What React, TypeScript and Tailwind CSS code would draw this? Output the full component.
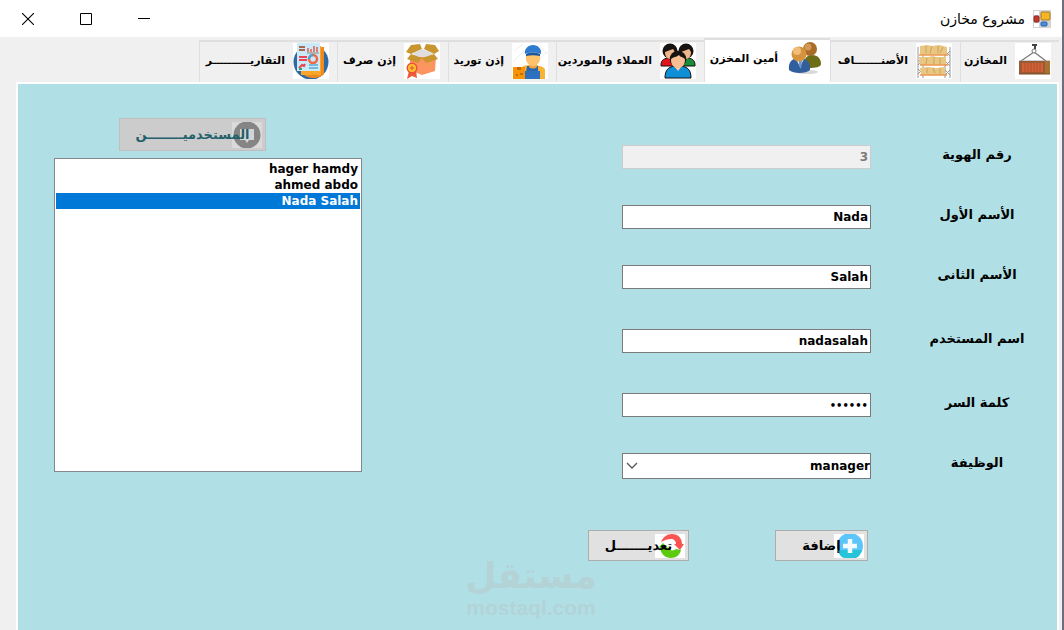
import { useState } from "react";
import type { ReactNode } from "react";
import clsx from "clsx";

const CrateIcon = () => (
  <svg viewBox="0 0 36 36" className="size-9 shrink-0 bg-white">
    <path d="M19 9 6 18M19 9l12 9" stroke="#777" strokeWidth="1.2" fill="none" />
    <path d="M17 1h5v2h-5zM19 3h2v3h-2z" fill="#444" />
    <circle cx="19" cy="8" r="2" fill="#fff" stroke="#777" />
    <path d="M4 18h31" stroke="#999" />
    <rect x="4" y="18" width="31" height="13" fill="#9a5a33" />
    <rect x="7" y="20" width="21" height="9" fill="#cf6336" />
    <path d="M10 20v9M13 20v9M16 20v9M19 20v9M22 20v9M25 20v9" stroke="#b04f2b" strokeWidth="1" />
    <rect x="30" y="18" width="5" height="13" fill="#a87233" />
    <path d="M4 31h31" stroke="#7b4a26" />
  </svg>
);

const ShelfIcon = () => (
  <svg viewBox="0 0 36 36" className="size-9 shrink-0 bg-white">
    <path d="M2 4v31M7 4v31M29 4v31M34 4v31M2 17l5 5M7 17l-5 5M2 26l5 5M7 26l-5 5M29 8l5 5M34 8l-5 5M29 18l5 5M34 18l-5 5M29 27l5 5M34 27l-5 5" stroke="#999" strokeWidth="1" />
    <path d="M4 3l7-1 5 1 7-1 8 2v8H4zM3 14h10l3-1 5 1h9v8H4zM4 25l8-1 8 1 9-1v8H5z" fill="#e9c682" />
    <path d="M10 3v7M16 3l-2 7M22 3v7M27 4l-3 6M11 15l-1 6M18 14v7M24 15v6M11 25v5M17 25l2 5M24 25v6" stroke="#cda258" />
    <path d="M3 12h29M4 22h28M4 32h27" stroke="#ee9650" strokeWidth="1.4" />
  </svg>
);

const KeeperIcon = () => (
  <svg viewBox="0 0 36 36" className="size-9 shrink-0">
    <ellipse cx="21" cy="31" rx="11" ry="2" fill="#d8d8d8" />
    <path d="M18 27c-1-11 4-13 8-13 6 0 9 4 9 9 0 3-6 4-12 4z" fill="#6d6d18" />
    <circle cx="24" cy="8" r="7" fill="#a96b28" />
    <circle cx="22" cy="6" r="3.5" fill="#d39a55" />
    <path d="M3 29c-1-8 3-12 10-12s12 4 11 12c-4 4-17 4-21 0z" fill="#315f9e" />
    <path d="M10 18l4 8 4-8z" fill="#dce8f4" />
    <path d="M13 20h3l-1 8-2-3z" fill="#6f98ca" />
    <circle cx="13" cy="13" r="7.5" fill="#d5933e" />
    <circle cx="11" cy="10" r="4" fill="#f0be78" />
  </svg>
);

const PeopleIcon = () => (
  <svg viewBox="0 0 36 36" className="size-9 shrink-0 bg-white">
    <path d="M1 22c0-5 3-7 9-7l4 8H1z" fill="#e3151c" stroke="#111" />
    <path d="M35 22c0-5-3-7-9-7l-4 8h13z" fill="#1a8b3a" stroke="#111" />
    <circle cx="10" cy="8" r="7.5" fill="#171310" />
    <path d="M5 9l8-3 2 3c0 4-2 7-5 7s-5-3-5-7z" fill="#f0b58b" />
    <circle cx="26" cy="8" r="7.5" fill="#171310" />
    <path d="M21 9l8-3 2 3c0 4-2 7-5 7s-5-3-5-7z" fill="#f0b58b" />
    <path d="M5 35c0-9 4-12 13-12s13 3 13 12z" fill="#0e8fd6" stroke="#111" />
    <path d="M14 23l4 5 4-5z" fill="#f8caa5" />
    <circle cx="18" cy="16" r="8.3" fill="#171310" />
    <path d="M11 17c0-3 4-2 8-5 2 3 6 2 6 5 0 5-3 8-7 8s-7-3-7-8z" fill="#f8bd92" />
  </svg>
);

const CourierIcon = () => (
  <svg viewBox="0 0 36 36" className="size-9 shrink-0 bg-white">
    <path d="M2 8l9-7M1 19 12 8M28 3l7 8M27 17l8-8" stroke="#eee" />
    <path d="M9 36V26c0-3 4-4 11-4s13 2 13 5v9z" fill="#f9b233" />
    <path d="M15 23h11v13H13z" fill="#2765b0" />
    <path d="M13 28h15v8H12z" fill="#2d70bf" />
    <path d="M17 19h8v5c-2 2-6 2-8 0z" fill="#f4a33e" />
    <path d="M14 11h14v5c0 4-4 7-7 7s-7-3-7-7z" fill="#ffc36e" />
    <path d="M13 11c-1-5 3-9 8-9s9 4 8 9c-5-2-11-2-16 0z" fill="#2f7bd0" />
    <path d="M14 11c5-2 9-2 14 0v2c-5-1-9-1-14 0z" fill="#1e569c" />
    <rect x="1" y="24" width="12" height="12" fill="#f79307" />
    <path d="M5 24h4v3H5z" fill="#c9660a" />
    <path d="M4 32h2M8 31h3" stroke="#8c460a" />
  </svg>
);

const OpenBoxIcon = () => (
  <svg viewBox="0 0 36 36" className="size-9 shrink-0 bg-white">
    <path d="M6 14h26l-1 14-13 4-12-5z" fill="#fb9460" />
    <path d="M7 2l9-1 2 5-11 5-5-2zM20 6l2-5 9 1 4 6-5 3z" fill="#c9952e" />
    <path d="M9 10l9-4 11 4-3 4H11z" fill="#dedede" />
    <path d="M7 11l11 4-4 5-11-4zM30 11l-12 4 4 5 12-4z" fill="#c9952e" />
    <path d="M23 22l3-2v3z" fill="#e3aa42" />
    <path d="M5 28l-2 8 5-3 5 2-1-8z" fill="#ef5a38" />
    <circle cx="8" cy="25" r="5.5" fill="#ee4e35" />
    <circle cx="8" cy="25" r="4" fill="#fcc72e" />
    <path d="M8 22l1 2 2 1-2 1-1 2-1-2-2-1 2-1z" fill="#ee6d35" />
  </svg>
);

const ReportIcon = () => (
  <svg viewBox="0 0 36 36" className="size-9 shrink-0 bg-white">
    <circle cx="18" cy="19" r="17.5" fill="#2f6aa5" />
    <path d="M12 4h19v27c-4 5-15 5-20 1z" fill="#f08a1c" />
    <path d="M8 3h20v29H8z" fill="#fba52d" />
    <path d="M4 0h23v28H4z" fill="#caeafa" />
    <path d="M6 4h6M6 7h6" stroke="#a9674f" strokeWidth="2" />
    <path d="M15 9V5M18 9V6M21 9V3M24 9V4" stroke="#e65b4a" strokeWidth="1.5" />
    <path d="M14 10h12" stroke="#8e8275" />
    <path d="M6 14h8M6 17h8" stroke="#ee4454" strokeWidth="2" />
    <circle cx="20" cy="16" r="4" fill="none" stroke="#ef6845" strokeWidth="2.5" />
    <path d="M16 16a4 4 0 0 1 4-4" fill="none" stroke="#4fa4d6" strokeWidth="2.5" />
    <path d="M6 25l3-3 2 1 1-2" fill="none" stroke="#e6464e" strokeWidth="2" />
    <path d="M6 26h3" stroke="#36a569" strokeWidth="2" />
    <path d="M16 22h9M16 25h9" stroke="#75b9dc" strokeWidth="2" />
  </svg>
);

const TABS = [
  { id: "stores", label: "المخازن", icon: <CrateIcon />, width: "w-[99px]" },
  { id: "items", label: "الأصنـــــــاف", icon: <ShelfIcon />, width: "w-[130px]" },
  { id: "keeper", label: "أمين المخزن", icon: <KeeperIcon />, width: "w-[126px]" },
  { id: "clients", label: "العملاء والموردين", icon: <PeopleIcon />, width: "w-[148px]" },
  { id: "supply", label: "إذن توريد", icon: <CourierIcon />, width: "w-[108px]" },
  { id: "issue", label: "إذن صرف", icon: <OpenBoxIcon />, width: "w-[111px]" },
  { id: "reports", label: "التقاريــــــــــر", icon: <ReportIcon />, width: "w-[138px]" },
];

const USERS = ["hager hamdy", "ahmed abdo", "Nada Salah"];

const inputClass = "block h-6 w-full border border-[#7a7a7a] bg-white px-0.5 text-right font-bold text-black outline-none";

export default function App() {
  const [tab, setTab] = useState("keeper");
  const [selected, setSelected] = useState("Nada Salah");

  return (
    <div dir="rtl" className="relative flex min-h-screen flex-col border-r-2 border-[#6d6f7c] bg-[#f0f0f0] font-['DejaVu_Sans',sans-serif] text-xs text-black">
      <TitleBar />

      <nav role="tablist" className="flex h-[45px] items-end pr-[3px] pt-px">
        {TABS.map((t) => (
          <button
            key={t.id}
            type="button"
            role="tab"
            aria-selected={tab === t.id}
            onClick={() => setTab(t.id)}
            className={clsx(
              "flex shrink-0 items-center gap-2 whitespace-nowrap border-l border-t-2 border-[#dfdfdf] pr-2 text-[11px] font-bold",
              t.width,
              tab === t.id ? "h-11 bg-white pb-1" : "h-[42px] pb-0.5"
            )}
          >
            {t.icon}
            {t.label}
          </button>
        ))}
      </nav>

      <main className="ml-4 mr-[3px] flex flex-1 items-start justify-between border-x-2 border-t-2 border-white bg-[#b0e0e6] pb-16 pl-9 pr-[26px]">
        <form className="pt-[61px]" onSubmit={(e) => e.preventDefault()}>
          <Field id="identity" label="رقم الهوية">
            <input id="identity" disabled defaultValue="3" className="block h-6 w-full border border-[#cccccc] bg-[#f0f0f0] px-0.5 text-right font-bold text-[#7b7b7b]" />
          </Field>
          <Field id="first" label="الأسم الأول" gap="mt-9">
            <input id="first" defaultValue="Nada" className={inputClass} />
          </Field>
          <Field id="last" label="الأسم الثانى" gap="mt-9">
            <input id="last" defaultValue="Salah" className={inputClass} />
          </Field>
          <Field id="username" label="اسم المستخدم" gap="mt-10">
            <input id="username" defaultValue="nadasalah" className={inputClass} />
          </Field>
          <Field id="password" label="كلمة السر" gap="mt-10">
            <input id="password" type="password" defaultValue="123456" className={clsx(inputClass, "text-[10px]")} />
          </Field>
          <Field id="job" label="الوظيفة" gap="mt-9">
            <div className="relative">
              <select id="job" defaultValue="manager" className="block h-[26px] w-full appearance-none border border-[#7a7a7a] bg-white font-bold outline-none">
                <option>manager</option>
                <option>employee</option>
              </select>
              <svg viewBox="0 0 12 8" className="pointer-events-none absolute left-1 top-2 h-2.5 w-3">
                <path d="M1 1l5 5 5-5" fill="none" stroke="#555" strokeWidth="1.3" />
              </svg>
            </div>
          </Field>

          <div className="mt-[51px] flex gap-[86px] pr-[163px]">
            <IconButton label="إضافة" className="h-[31px] w-[93px] border-[#adadad] bg-[#e1e1e1]">
              <svg viewBox="0 0 30 24" className="h-6 w-[30px] bg-white">
                <circle cx="16" cy="12" r="13" fill="#5cc6fb" />
                <path d="M4 16h24c-2 6-5 8-7 8H11c-3 0-6-3-7-8z" fill="#27c3d8" />
                <path d="M16 5v14M9 12h14" stroke="#f4fbff" strokeWidth="4.5" />
              </svg>
            </IconButton>
            <IconButton label="تعديـــــــل" className="h-[31px] w-[101px] border-[#adadad] bg-[#e1e1e1]">
              <svg viewBox="0 0 30 24" className="h-6 w-[30px] bg-white">
                <path d="M6 8C8 3 12 0 17 0c6 0 10 4 10 10l2 0-4 6-6-6h2c0-3-2-5-5-5-4 0-6 1-10 3z" fill="#fb5350" />
                <path d="M4 13l4-4 5 5c2 3 6 3 8 1l5 1c-1 5-5 8-10 8-6 0-10-4-11-10z" fill="#5ccb10" />
              </svg>
            </IconButton>
          </div>
        </form>

        <section className="w-[308px] pt-[34px]">
          <div className="pr-24">
            <IconButton disabled label="المستخدميــــــــن" className="h-[33px] w-[147px] border-[#bfbfbf] bg-[#cccccc] text-[#22606b]">
              <svg viewBox="0 0 30 26" className="h-[26px] w-[30px] bg-[#dadada]">
                <circle cx="15" cy="13" r="13.5" fill="#858585" />
                <path d="M8 7h14v11h-5l-2 3-2-3H8z" fill="#d4d4d4" />
              </svg>
            </IconButton>
          </div>
          <ul role="listbox" aria-label="المستخدمين" className="mt-[7px] h-[314px] border border-[#828790] bg-white px-px py-0.5 font-bold">
            {USERS.map((u) => (
              <li
                key={u}
                role="option"
                aria-selected={selected === u}
                onClick={() => setSelected(u)}
                className={clsx("h-4 px-0.5 leading-4", selected === u && "bg-[#0078d7] text-white")}
              >
                {u}
              </li>
            ))}
          </ul>
        </section>
      </main>

      {/* Filigrane */}
      <div aria-hidden="true" className="pointer-events-none absolute inset-x-0 bottom-3 text-center font-bold text-[#b3d3d7]">
        <div className="text-4xl leading-[44px]">مستقل</div>
        <div className="font-['Liberation_Sans',sans-serif] text-[21px] leading-5">mostaql.com</div>
      </div>
    </div>
  );
}

function TitleBar() {
  return (
    <header className="flex h-[37px] items-center justify-between bg-white pl-5 pr-[11px]">
      <div className="flex items-center gap-2">
        <svg viewBox="0 0 18 18" className="size-[18px] bg-[#d4d4d4]">
          <path d="M1 1h5v4H1zM1 13h5v4H1z" fill="#fff" />
          <rect x="8" y="2" width="9" height="8" rx="1" fill="#f6b526" stroke="#a77b22" />
          <rect x="1" y="6" width="5" height="6" rx="1" fill="#c6392d" stroke="#8f2720" />
          <rect x="8" y="12" width="6" height="4" rx="1" fill="#4a8ee0" stroke="#2862ae" />
        </svg>
        <h1 className="text-sm">مشروع مخازن</h1>
      </div>
      <div className="flex items-center gap-[42px]">
        <button type="button" aria-label="تصغير" className="flex size-4 items-center justify-center">
          <svg viewBox="0 0 12 12" className="size-3"><path d="M0 5.5h12" stroke="#000" /></svg>
        </button>
        <button type="button" aria-label="تكبير" className="flex size-4 items-center justify-center">
          <svg viewBox="0 0 12 12" className="size-3"><path d="M.5.5h11v11H.5z" fill="none" stroke="#000" /></svg>
        </button>
        <button type="button" aria-label="إغلاق" className="flex size-4 items-center justify-center">
          <svg viewBox="0 0 12 12" className="size-3"><path d="M0 0l12 12M12 0 0 12" stroke="#000" strokeWidth="1.1" /></svg>
        </button>
      </div>
    </header>
  );
}

function Field({ id, label, gap, children }: { id: string; label: string; gap?: string; children: ReactNode }) {
  return (
    <div className={clsx("flex items-start", gap)}>
      <label htmlFor={id} className="ml-[52px] w-[108px] text-center text-[13px] font-bold leading-5">{label}</label>
      <div className="w-[249px]">{children}</div>
    </div>
  );
}

function IconButton({ label, className, disabled, children }: {
  label: string; className: string; disabled?: boolean; children: ReactNode;
}) {
  return (
    <button type="button" disabled={disabled} className={clsx("relative border text-[13px] font-bold", className)}>
      {/* L'icône passe sous le texte */}
      <span className="absolute inset-y-0 right-[3px] flex items-center">{children}</span>
      <span className="relative whitespace-nowrap">{label}</span>
    </button>
  );
}
